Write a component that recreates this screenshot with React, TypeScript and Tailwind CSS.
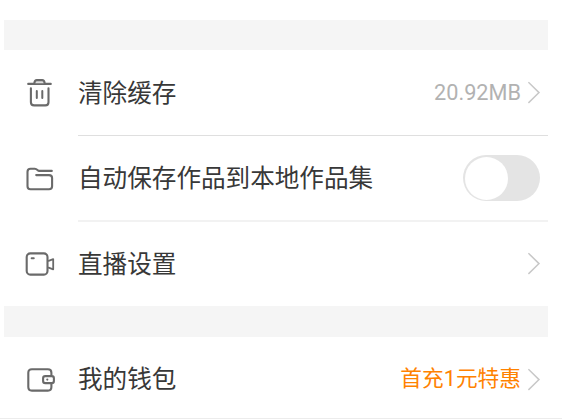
import React, { useState } from 'react';

interface IconProps {
  className?: string;
}

interface SettingRowProps {
  icon: React.ReactNode;
  label: string;
  className?: string;
  children?: React.ReactNode;
}

const TrashIcon: React.FC<IconProps> = ({ className }) => (
  <svg className={className} viewBox="0 0 33 33" fill="none" stroke="currentColor" strokeWidth="2.1" strokeLinecap="round" strokeLinejoin="round">
    <path d="M4.2 7.9H26.8" />
    <path d="M10.3 7.3C10.6 5 11.2 4.1 12.8 4.1H18.2C19.8 4.1 20.4 5 20.7 7.3" fill="#ddd" />
    <path d="M6.9 12.3V26.2Q6.9 29.4 10.1 29.4H21.3Q24.5 29.4 24.5 26.2V12.3" />
    <path d="M12.8 15V22M18.3 15V22" strokeWidth="2" />
  </svg>
);

const FolderIcon: React.FC<IconProps> = ({ className }) => (
  <svg className={className} viewBox="0 0 33 33" fill="none" stroke="currentColor" strokeWidth="2.1" strokeLinecap="round" strokeLinejoin="round">
    <path d="M27.8 8.9H15.2C13.5 8.9 13.3 6.7 10.8 6.7H6.5Q3.5 6.7 3.5 9.7V24.3Q3.5 27.3 6.5 27.3H25Q28.1 27.3 28.1 24.3V16.1Q28.1 13.1 25 13.1H12.2" />
  </svg>
);

const CameraIcon: React.FC<IconProps> = ({ className }) => (
  <svg className={className} viewBox="0 0 33 33" fill="none" stroke="currentColor" strokeWidth="2.1" strokeLinecap="round" strokeLinejoin="round">
    <rect x="2.7" y="6.4" width="20.8" height="21.2" rx="3.6" />
    <path d="M24.6 13.8L29.2 12.1V22.3L24.6 20.6" strokeWidth="1.8" />
    <path d="M7.6 11.3H9.8" strokeWidth="1.9" />
  </svg>
);

const WalletIcon: React.FC<IconProps> = ({ className }) => (
  <svg className={className} viewBox="0 0 33 33" fill="none" stroke="currentColor" strokeWidth="2.1" strokeLinejoin="round">
    <path d="M27.4 12.6V9.7Q27.4 6.2 23.9 6.2H7.9Q4.3 6.2 4.3 9.7V24Q4.3 27.6 7.9 27.6H23.9Q27.4 27.6 27.4 24V20.4" />
    <rect x="19.1" y="13.1" width="10.8" height="7" rx="2.2" />
    <circle cx="23.3" cy="16.6" r="1.1" fill="currentColor" stroke="none" />
  </svg>
);

const Chevron = () => (
  <svg className="ml-[7px] h-[23px] w-[13px]" viewBox="0 0 13 23" fill="none" stroke="#c8c8c8" strokeWidth="1.5">
    <path d="M0.4 1.2L11 11.6L0.4 22" />
  </svg>
);

const SettingRow: React.FC<SettingRowProps> = ({ icon, label, className = '', children }) => (
  <div className={`flex pl-5 text-[#6a6a6a] ${className}`}>
    <div className="flex w-[54px] items-center">{icon}</div>
    <div className="flex grow items-center pr-[7px]">
      <span className="grow pt-[3px] text-[24.6px] leading-none text-[#383838]">{label}</span>
      {children}
    </div>
  </div>
);

const App: React.FC = () => {
  const [autoSave, setAutoSave] = useState(false);

  return (
    <div className="h-[419px] w-[562px] overflow-hidden bg-white pt-5 font-['Roboto','Noto_Sans_CJK_SC',sans-serif]">
      <div className="ml-1 w-[544px]">
        <div className="h-[30px] bg-[#f5f5f5]" />
        <SettingRow icon={<TrashIcon className="h-[33px] w-[33px]" />} label="清除缓存" className="h-[85px]">
          <span className="text-[21.7px] leading-none text-[#b2b2b2]">20.92MB</span>
          <Chevron />
        </SettingRow>
        <div className="ml-[74px] h-px bg-[#dfdfdf]" />
        <SettingRow icon={<FolderIcon className="h-[33px] w-[33px]" />} label="自动保存作品到本地作品集" className="h-[84px]">
          <button
            role="switch"
            aria-checked={autoSave}
            aria-label="自动保存作品到本地作品集"
            onClick={() => setAutoSave(!autoSave)}
            className={`mr-px flex h-[46px] w-[77px] items-center rounded-full px-0.5 ${autoSave ? 'justify-end bg-[#ff8200]' : 'bg-[#e4e4e4]'}`}
          >
            <span className="h-[43px] w-[43px] rounded-full bg-white" />
          </button>
        </SettingRow>
        <div className="ml-[74px] h-0.5 bg-[#f2f2f2]" />
        <SettingRow icon={<CameraIcon className="h-[33px] w-[33px]" />} label="直播设置" className="h-[84px] pb-px">
          <Chevron />
        </SettingRow>
        <div className="h-[31px] bg-[#f5f5f5]" />
        <SettingRow icon={<WalletIcon className="h-[33px] w-[33px]" />} label="我的钱包" className="h-[81px] pt-[3px]">
          <span className="text-[21.7px] leading-none text-[#ff8200]">首充1元特惠</span>
          <Chevron />
        </SettingRow>
      </div>
      <div className="h-px bg-[#ececec]" />
    </div>
  );
};

export default App;
